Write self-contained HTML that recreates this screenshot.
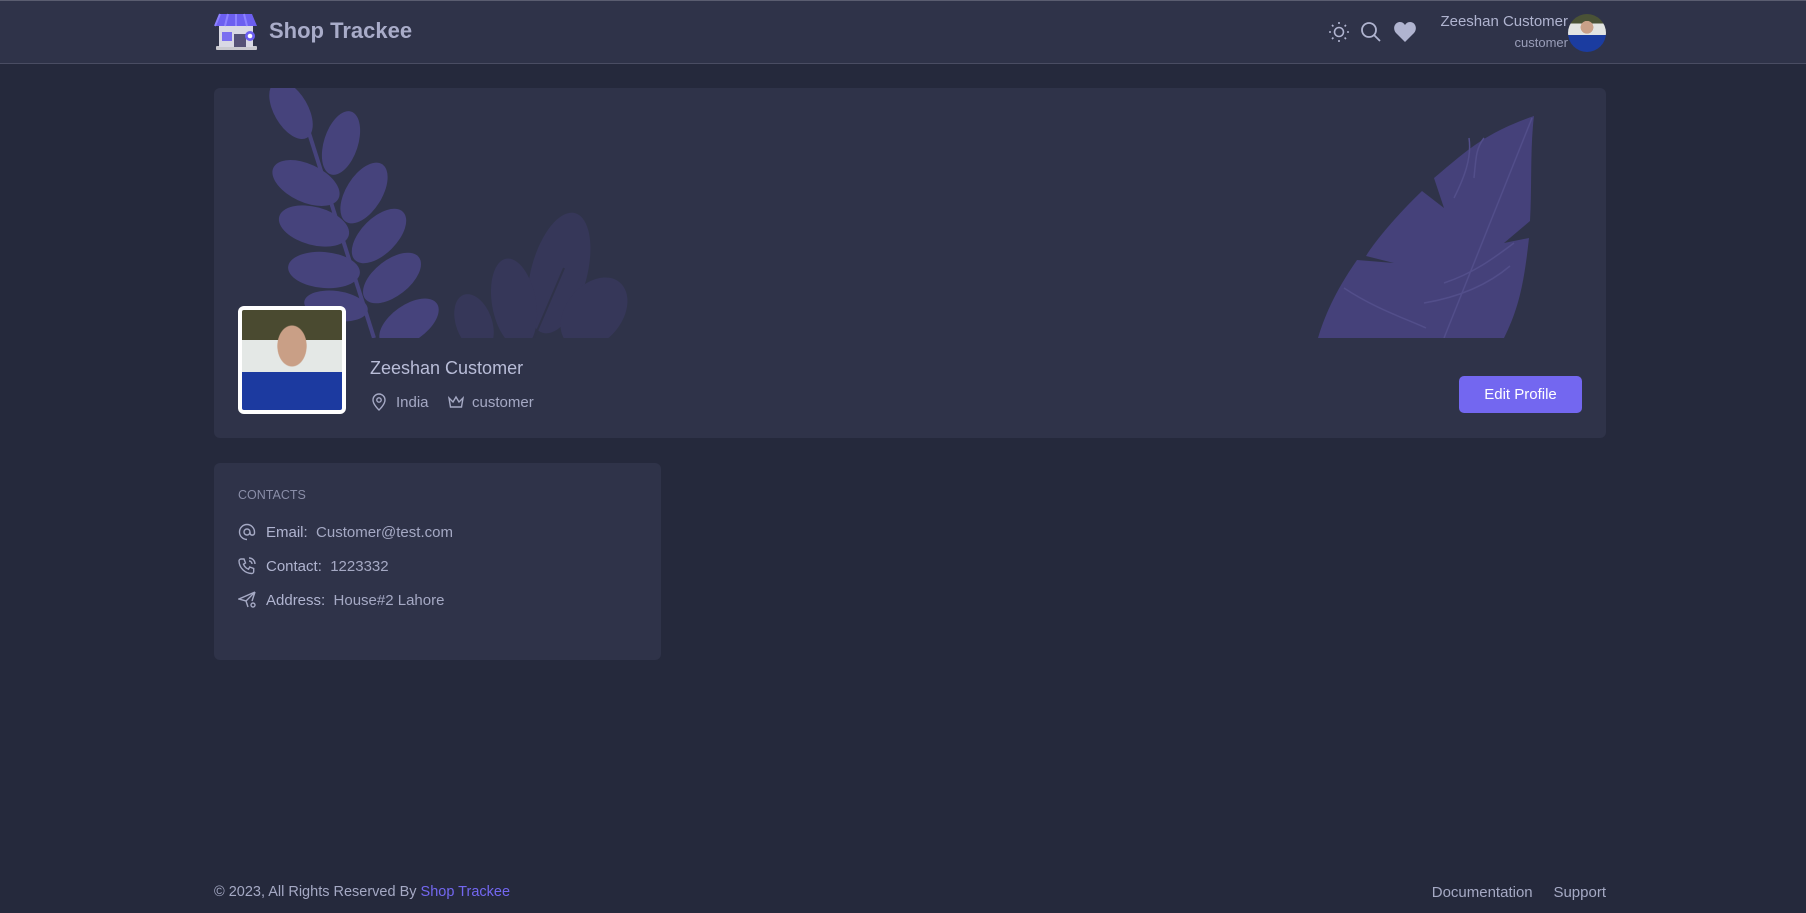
<!DOCTYPE html>
<html><head><meta charset="utf-8"><style>
*{box-sizing:border-box;margin:0;padding:0}
body{width:1806px;height:913px;background:#25293c;font-family:"Liberation Sans",sans-serif;color:#b6bee3;position:relative;overflow:hidden}
.hdr{position:absolute;left:0;top:0;width:1806px;height:64px;background:#2f3349;border-top:1px solid #5a5d70;border-bottom:1px solid #4a4d63}
.abs{position:absolute}
.card{position:absolute;background:#2f3349;border-radius:6px}
.t{color:#b0b4d0}
</style></head><body>
<div class="hdr"></div>
<svg class="abs" style="left:214px;top:12px" width="46" height="42" viewBox="0 0 46 42">
<rect x="2" y="34" width="41" height="4" rx="1" fill="#c9c9cf"/>
<rect x="5" y="14" width="34" height="21" fill="#d9d9e4"/>
<rect x="8" y="20" width="10" height="9" fill="#7b6ff0"/>
<rect x="20" y="22" width="12" height="13" fill="#555276"/>
<path d="M6 2h32l5 12H1z" fill="#6c5ff0"/>
<path d="M6 2l-5 12 M14 2l-3 12 M22 2v12 M30 2l3 12" stroke="#8d82ff" stroke-width="2"/>
<circle cx="36" cy="24" r="5" fill="#6c5ff0"/><circle cx="36" cy="24" r="2.3" fill="#fff"/>
</svg>
<div class="abs" style="left:269px;top:18px;font-size:22px;font-weight:bold;color:#a9acc9">Shop Trackee</div>
<svg class="abs" style="left:1327px;top:21px" width="24" height="22" viewBox="0 0 24 22" fill="none" stroke="#b0b4d0" stroke-width="1.6"><circle cx="12" cy="11" r="4.5"/><path d="M12 1v2M12 19v2M2 11h2M20 11h2M5 4l1.4 1.4M17.6 16.6L19 18M5 18l1.4-1.4M17.6 5.4L19 4"/></svg>
<svg class="abs" style="left:1360px;top:21px" width="22" height="22" viewBox="0 0 22 22" fill="none" stroke="#b0b4d0" stroke-width="1.8"><circle cx="9" cy="9" r="7"/><path d="M14 14l6 6"/></svg>
<svg class="abs" style="left:1393px;top:21px" width="24" height="22" viewBox="0 0 24 22"><path d="M12 21L3 12C-1 7 2 1 7 1c2.5 0 4 1.5 5 3 1-1.5 2.5-3 5-3 5 0 8 6 4 11z" fill="#b0b4d0"/></svg>
<div class="abs t" style="right:238px;top:13px;font-size:15px">Zeeshan Customer</div>
<div class="abs t" style="right:238px;top:35px;font-size:13px;color:#9a9eb9">customer</div>
<div class="abs" style="left:1568px;top:14px;width:38px;height:38px;border-radius:50%;background:radial-gradient(circle at 50% 35%,#c9a088 0 20%,transparent 21%),linear-gradient(#4a5236 0 25%,#e2e4e2 25% 55%,#1b3ca0 55%);"></div>

<div class="card" style="left:214px;top:88px;width:1392px;height:350px;overflow:hidden">
<svg class="abs" style="left:0;top:0" width="1392" height="250" viewBox="0 0 1392 250">
<g fill="#363759">
<ellipse cx="345" cy="185" rx="28" ry="62" transform="rotate(15 345 185)"/>
<ellipse cx="300" cy="215" rx="22" ry="45" transform="rotate(-10 300 215)"/>
<ellipse cx="380" cy="225" rx="28" ry="40" transform="rotate(40 380 225)"/>
<ellipse cx="260" cy="235" rx="18" ry="30" transform="rotate(-20 260 235)"/>
</g>
<path d="M350 180L320 250" stroke="#2f3249" stroke-width="2"/>
<g fill="#46437c">
<path d="M95 45L160 250" stroke="#46437c" stroke-width="4"/>
<ellipse cx="77" cy="22" rx="32" ry="17" transform="rotate(60 77 22)"/>
<ellipse cx="127" cy="55" rx="33" ry="17" transform="rotate(-72 127 55)"/>
<ellipse cx="150" cy="105" rx="34" ry="18" transform="rotate(-58 150 105)"/>
<ellipse cx="165" cy="148" rx="34" ry="18" transform="rotate(-45 165 148)"/>
<ellipse cx="178" cy="190" rx="34" ry="18" transform="rotate(-38 178 190)"/>
<ellipse cx="195" cy="235" rx="34" ry="18" transform="rotate(-35 195 235)"/>
<ellipse cx="92" cy="95" rx="36" ry="19" transform="rotate(25 92 95)"/>
<ellipse cx="100" cy="138" rx="36" ry="19" transform="rotate(15 100 138)"/>
<ellipse cx="110" cy="182" rx="36" ry="18" transform="rotate(5 110 182)"/>
<ellipse cx="122" cy="218" rx="32" ry="15" transform="rotate(8 122 218)"/>
<path d="M1320 28C1270 45 1250 65 1220 90L1230 120 1208 103C1180 130 1160 155 1152 168L1180 175 1143 172C1120 205 1110 230 1104 250H1290C1305 220 1310 195 1315 150L1290 155 1316 133C1318 100 1316 60 1320 28z" fill="#45417a"/>
</g>
<path d="M1318 30L1230 250M1296 178C1270 200 1240 210 1210 215M1300 155C1280 170 1260 185 1230 195M1130 200C1160 220 1190 230 1212 240M1240 110C1250 90 1258 70 1255 50M1260 90C1262 70 1262 60 1270 50" stroke="#524e8a" stroke-width="1.5" fill="none"/>
</svg>
<div class="abs" style="left:24px;top:218px;width:108px;height:108px;background:#fff;border-radius:6px;padding:4px">
<div style="width:100%;height:100%;border-radius:2px;background:radial-gradient(ellipse 15px 21px at 50% 36%,#c99f86 95%,transparent 100%),linear-gradient(#4a4a30 0 30%,#e4e8e6 30% 62%,#1c3aa0 62%)"></div></div>
<div class="abs t" style="left:156px;top:270px;font-size:18px;color:#b9bdd8">Zeeshan Customer</div>
<svg class="abs" style="left:157px;top:305px" width="16" height="18" viewBox="0 0 16 18" fill="none" stroke="#a5a9c4" stroke-width="1.4"><path d="M8 17s6-5.5 6-10A6 6 0 002 7c0 4.5 6 10 6 10z"/><circle cx="8" cy="7" r="2.2"/></svg>
<div class="abs t" style="left:182px;top:306px;font-size:15px;color:#a5a9c4">India</div>
<svg class="abs" style="left:233px;top:307px" width="18" height="14" viewBox="0 0 18 14" fill="none" stroke="#a5a9c4" stroke-width="1.4"><path d="M2 3l4 4 3-5 3 5 4-4-1.5 9h-11z"/></svg>
<div class="abs t" style="left:258px;top:306px;font-size:15px;color:#a5a9c4">customer</div>
<div class="abs" style="left:1245px;top:288px;width:123px;height:37px;background:#7367f0;border-radius:5px;color:#fff;font-size:15px;text-align:center;line-height:37px">Edit Profile</div>
</div>

<div class="card" style="left:214px;top:463px;width:447px;height:197px">
<div class="abs" style="left:24px;top:25px;font-size:12.5px;color:#8a8ea8">CONTACTS</div>
<svg class="abs" style="left:24px;top:60px" width="18" height="18" viewBox="0 0 18 18" fill="none" stroke="#a5a9c4" stroke-width="1.4"><circle cx="9" cy="9" r="3"/><path d="M12 9v1.3a2.3 2.3 0 004.5 0V9A7.5 7.5 0 109 16.5"/></svg>
<div class="abs t" style="left:52px;top:61px;font-size:15px;color:#a5a9c4"><span style="color:#b0b4d0">Email:</span>&nbsp; Customer@test.com</div>
<svg class="abs" style="left:24px;top:94px" width="18" height="18" viewBox="0 0 18 18" fill="none" stroke="#a5a9c4" stroke-width="1.4"><path d="M3 2h3l1.5 4-2 1.2a9 9 0 005 5L11.7 10l4 1.5v3a2 2 0 01-2 2A13 13 0 011 4a2 2 0 012-2zM11 1a6 6 0 016 6M11 4a3 3 0 013 3"/></svg>
<div class="abs t" style="left:52px;top:95px;font-size:15px;color:#a5a9c4"><span style="color:#b0b4d0">Contact:</span>&nbsp; 1223332</div>
<svg class="abs" style="left:24px;top:128px" width="20" height="18" viewBox="0 0 20 18" fill="none" stroke="#a5a9c4" stroke-width="1.4"><path d="M17 1L1 8l7 2 2 6M17 1l-3 9M8 10l9-9"/><circle cx="15" cy="14" r="2"/></svg>
<div class="abs t" style="left:52px;top:129px;font-size:15px;color:#a5a9c4"><span style="color:#b0b4d0">Address:</span>&nbsp; House#2 Lahore</div>
</div>

<div class="abs" style="left:214px;top:884px;font-size:14.5px;color:#a5a9c4">© 2023, All Rights Reserved By <span style="color:#7367f0">Shop Trackee</span></div>
<div class="abs" style="right:200px;top:884px;font-size:15px;color:#a5a9c4">Documentation &nbsp;&nbsp;&nbsp; Support</div>
</body></html>
